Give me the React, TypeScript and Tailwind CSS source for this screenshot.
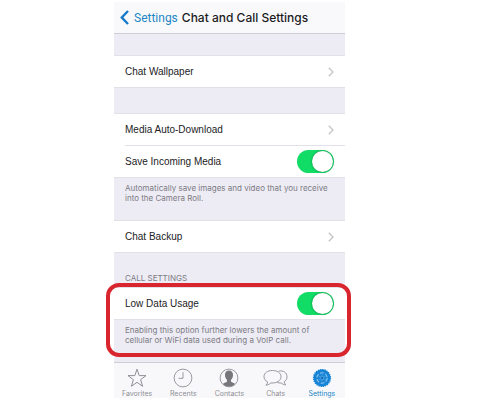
import React from 'react';

function Chevron() {
  return (
    <svg viewBox="0 0 6 10" className="h-[10px] w-[6px]" fill="none" stroke="#c4c4c8" strokeWidth="1.3" aria-hidden="true">
      <path d="M0.8 0.8 5 5 0.8 9.2" />
    </svg>
  );
}

function LinkRow({ label }: { label: string }) {
  return (
    <button type="button" className="flex h-[31px] w-full items-center justify-between pr-[11px] text-left font-['Liberation_Sans',sans-serif] text-[10px] text-[#222224]">
      {label}
      <Chevron />
    </button>
  );
}

function SwitchRow({ id, label }: { id: string; label: string }) {
  return (
    <div className="flex h-[31px] items-center justify-between pr-[11px]">
      <label htmlFor={id} className="font-['Liberation_Sans',sans-serif] text-[10px] text-[#222224]">
        {label}
      </label>
      <input
        id={id}
        type="checkbox"
        role="switch"
        defaultChecked
        className="relative h-[23px] w-[37px] appearance-none rounded-full bg-[#c8c8cc] before:absolute before:top-px before:left-px before:size-[21px] before:rounded-full before:bg-white before:shadow-[0_0_2px_rgba(0,0,0,0.5)] checked:bg-[#10dc66] checked:before:left-[15px]"
      />
    </div>
  );
}

function Group({ children }: { children: React.ReactNode }) {
  return <div className="border-y border-[#e2e1e7] bg-white pl-[11px]">{children}</div>;
}

function Note({ children }: { children: React.ReactNode }) {
  return <p className="h-[42px] px-[11px] pt-[5px] text-[8px] leading-[10px] text-[#7c7b82]">{children}</p>;
}

function StarIcon() {
  return (
    <svg viewBox="0 0 22 20" className="h-5 w-[22px]" fill="none" stroke="currentColor" strokeWidth="1">
      <path d="M11 1.2 13.2 7.6H20L14.6 11.7 16.6 18.3 11 14.3 5.4 18.3 7.4 11.7 2 7.6H8.8Z" />
    </svg>
  );
}

function ClockIcon() {
  return (
    <svg viewBox="0 0 22 20" className="h-5 w-[22px]" fill="none" stroke="currentColor" strokeWidth="0.9">
      <circle cx="11" cy="10" r="8.9" />
      <path d="M11 4.2V10.3H6.5" />
    </svg>
  );
}

function ContactIcon() {
  return (
    <svg viewBox="0 0 22 20" className="h-5 w-[22px]" fill="none">
      <circle cx="11" cy="10" r="8.9" stroke="currentColor" strokeWidth="0.9" />
      <path
        fill="#77777b"
        d="M11 2.6C8.4 2.6 6.9 4.4 7 6.9 7 9 7.8 10.8 9 11.8V13.2C9 14.2 6.4 14.5 4.9 16A8.6 8.6 0 0 0 17.1 16C15.6 14.5 13 14.2 13 13.2V11.8C14.2 10.8 15 9 15 6.9 15.1 4.4 13.6 2.6 11 2.6Z"
      />
    </svg>
  );
}

function ChatsIcon() {
  return (
    <svg viewBox="0 0 25 20" className="h-5 w-[25px]" fill="none" stroke="currentColor" strokeWidth="0.9" strokeLinejoin="round">
      <path d="M15.5 3.2C20.5 2 24 4.8 24 8.7 24 11 22.9 12.7 21.2 13.8 21.3 15.2 22 16.2 22.8 16.9 20.8 16.8 19.2 16 18.2 15 16.6 15.2 15.1 14.8 14 14.1" />
      <path d="M9.5 2.5C4.6 2.5 1 5 1 8.6 1 10.9 2.4 12.9 4.6 13.9 4.5 15.4 3.8 16.4 2.9 17.2 5.1 17 6.9 16 7.9 14.9 13.6 15.6 18 12.7 18 8.7 18 5 14.4 2.5 9.5 2.5Z" />
    </svg>
  );
}

const gearAngles = [0, 60, 120, 180, 240, 300];

function GearIcon() {
  return (
    <svg viewBox="0 0 22 20" className="h-5 w-[22px]" fill="none">
      <circle cx="11" cy="10" r="8.4" fill="#1683d5" />
      <circle cx="11" cy="10" r="8.5" stroke="#1683d5" strokeWidth="1.2" strokeDasharray="1.4 0.82" />
      <circle cx="11" cy="10" r="5.2" stroke="#8cc5ee" strokeWidth="1.1" strokeDasharray="3.9 1.54" />
      {gearAngles.map((angle) => (
        <path key={angle} d="M11 7.8V5.4" stroke="#4fa5e0" strokeWidth="0.7" transform={`rotate(${angle} 11 10)`} />
      ))}
      <circle cx="11" cy="10" r="1.8" fill="#0d6fbd" stroke="#70b7e8" strokeWidth="0.6" />
    </svg>
  );
}

const tabs = [
  { label: 'Favorites', icon: <StarIcon /> },
  { label: 'Recents', icon: <ClockIcon /> },
  { label: 'Contacts', icon: <ContactIcon /> },
  { label: 'Chats', icon: <ChatsIcon /> },
  { label: 'Settings', icon: <GearIcon />, active: true },
];

export default function App() {
  return (
    <div className="min-h-screen bg-white pt-[2px] pr-[135px] pl-[114px] font-['Inter','Liberation_Sans',sans-serif]">
      <main className="bg-[#edecf5]">
        <header className="flex h-[31px] items-center bg-[#f9f9fb] pl-[6px] text-[12px]">
          <button type="button" className="flex items-center gap-[5px] font-['Roboto',sans-serif] text-[#2287c6]">
            <svg viewBox="0 0 9 15" className="h-[15px] w-[9px]" fill="none" stroke="#1879c9" strokeWidth="2.4" aria-hidden="true">
              <path d="M8 1 1.8 7.5 8 14" />
            </svg>
            Settings
          </button>
          <h1 className="ml-1 font-medium whitespace-nowrap text-[#1c1c1f]">Chat and Call Settings</h1>
        </header>

        <div className="h-[22px] border-t border-[#cfced6]" />
        <Group>
          <LinkRow label="Chat Wallpaper" />
        </Group>

        <div className="h-[25px]" />
        <Group>
          <LinkRow label="Media Auto-Download" />
          <div className="border-t border-[#e2e1e7]">
            <SwitchRow id="save-media" label="Save Incoming Media" />
          </div>
        </Group>
        <Note>Automatically save images and video that you receive into the Camera Roll.</Note>

        <Group>
          <LinkRow label="Chat Backup" />
        </Group>

        <h2 className="h-[34px] px-[11px] pt-[19px] text-[8px] leading-[12px] text-[#7c7b82]">CALL SETTINGS</h2>
        <section className="relative">
          <Group>
            <SwitchRow id="low-data" label="Low Data Usage" />
          </Group>
          <Note>Enabling this option further lowers the amount of cellular or WiFi data used during a VoIP call.</Note>
          {/* highlight around the low data option */}
          <div className="pointer-events-none absolute -top-1 -right-[6px] bottom-[5px] -left-2 rounded-[13px] border-4 border-[#d9252e]" />
        </section>

        <nav className="grid h-9 grid-cols-5 border-t border-[#cfced6] bg-[#f8f8fb]">
          {tabs.map((tab) => (
            <button
              key={tab.label}
              type="button"
              className={`flex flex-col items-center pt-[5px] text-[7px] leading-[12px] ${tab.active ? 'text-[#2287c6]' : 'text-[#8f8f94]'}`}
            >
              {tab.icon}
              {tab.label}
            </button>
          ))}
        </nav>
      </main>
    </div>
  );
}
